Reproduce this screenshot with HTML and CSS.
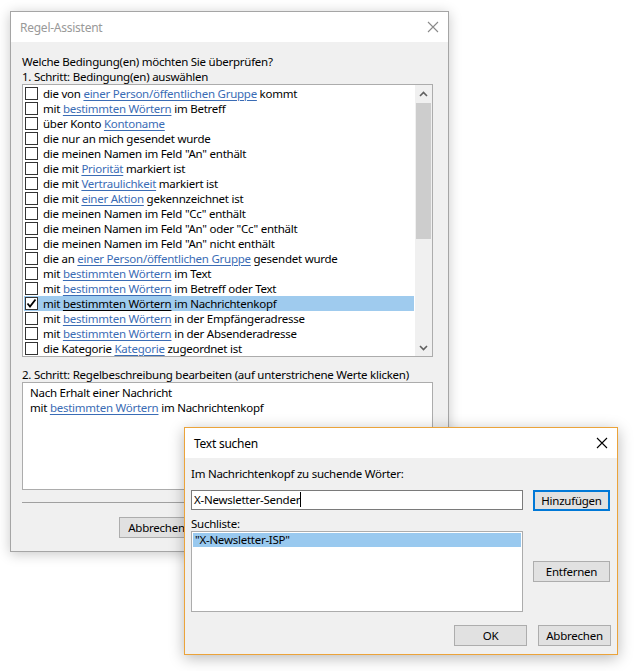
FILE: index.html
```html
<!DOCTYPE html>
<html lang="de">
<head>
<meta charset="utf-8">
<title>Regel-Assistent</title>
<link rel="stylesheet" href="styles.css">
</head>
<body>
<div class="win win-main">
  <div class="titlebar">
    <span class="title inactive">Regel-Assistent</span>
    <svg class="close" width="12" height="12" viewBox="0 0 12 12"><path d="M1 1L11 11M11 1L1 11" stroke="#8a8a8a" stroke-width="1.1" fill="none"/></svg>
  </div>
  <div class="main-body">
    <div class="label">Welche Bedingung(en) möchten Sie überprüfen?</div>
    <div class="label">1. Schritt: Bedingung(en) auswählen</div>
    <div class="listbox">
      <div class="rows">
        <div class="row"><span class="cb"></span><span>die von <a>einer Person/öffentlichen Gruppe</a> kommt</span></div>
        <div class="row"><span class="cb"></span><span>mit <a>bestimmten Wörtern</a> im Betreff</span></div>
        <div class="row"><span class="cb"></span><span>über Konto <a>Kontoname</a></span></div>
        <div class="row"><span class="cb"></span><span>die nur an mich gesendet wurde</span></div>
        <div class="row"><span class="cb"></span><span>die meinen Namen im Feld "An" enthält</span></div>
        <div class="row"><span class="cb"></span><span>die mit <a>Priorität</a> markiert ist</span></div>
        <div class="row"><span class="cb"></span><span>die mit <a>Vertraulichkeit</a> markiert ist</span></div>
        <div class="row"><span class="cb"></span><span>die mit <a>einer Aktion</a> gekennzeichnet ist</span></div>
        <div class="row"><span class="cb"></span><span>die meinen Namen im Feld "Cc" enthält</span></div>
        <div class="row"><span class="cb"></span><span>die meinen Namen im Feld "An" oder "Cc" enthält</span></div>
        <div class="row"><span class="cb"></span><span>die meinen Namen im Feld "An" nicht enthält</span></div>
        <div class="row"><span class="cb"></span><span>die an <a>einer Person/öffentlichen Gruppe</a> gesendet wurde</span></div>
        <div class="row"><span class="cb"></span><span>mit <a>bestimmten Wörtern</a> im Text</span></div>
        <div class="row"><span class="cb"></span><span>mit <a>bestimmten Wörtern</a> im Betreff oder Text</span></div>
        <div class="row selected"><span class="cb checked"><svg width="11" height="11" viewBox="0 0 11 11"><path d="M1.5 5.5L4 8.5L9.5 1.5" stroke="#000" stroke-width="1.8" fill="none"/></svg></span><span>mit <a>bestimmten Wörtern</a> im Nachrichtenkopf</span></div>
        <div class="row"><span class="cb"></span><span>mit <a>bestimmten Wörtern</a> in der Empfängeradresse</span></div>
        <div class="row"><span class="cb"></span><span>mit <a>bestimmten Wörtern</a> in der Absenderadresse</span></div>
        <div class="row"><span class="cb"></span><span>die Kategorie <a>Kategorie</a> zugeordnet ist</span></div>
      </div>
      <div class="scrollbar">
        <div class="sb-arrow"><svg width="9" height="6" viewBox="0 0 9 6"><path d="M1 5L4.5 1.5L8 5" stroke="#606060" stroke-width="1.6" fill="none"/></svg></div>
        <div class="sb-track"><div class="sb-thumb"></div></div>
        <div class="sb-arrow"><svg width="9" height="6" viewBox="0 0 9 6"><path d="M1 1L4.5 4.5L8 1" stroke="#606060" stroke-width="1.6" fill="none"/></svg></div>
      </div>
    </div>
    <div class="label step2">2. Schritt: Regelbeschreibung bearbeiten (auf unterstrichene Werte klicken)</div>
    <div class="desc">
      <div>Nach Erhalt einer Nachricht</div>
      <div>mit <a>bestimmten Wörtern</a> im Nachrichtenkopf</div>
    </div>
    <div class="sep"></div>
    <div class="main-buttons">
      <div class="btn btn-main">Abbrechen</div>
    </div>
  </div>
</div>

<div class="win win-search">
  <div class="titlebar">
    <span class="title">Text suchen</span>
    <svg class="close" width="12" height="12" viewBox="0 0 12 12"><path d="M1 1L11 11M11 1L1 11" stroke="#000" stroke-width="1.1" fill="none"/></svg>
  </div>
  <div class="search-body">
    <div class="label">Im Nachrichtenkopf zu suchende Wörter:</div>
    <div class="s-row1">
      <div class="input"><span class="caret">X-Newsletter-Sender</span></div>
      <div class="btn btn-default">Hinzufügen</div>
    </div>
    <div class="label s-label2">Suchliste:</div>
    <div class="s-row2">
      <div class="s-list"><div class="s-item">"X-Newsletter-ISP"</div></div>
      <div class="s-side"><div class="btn btn-side">Entfernen</div></div>
    </div>
    <div class="s-foot">
      <div class="btn btn-s">OK</div>
      <div class="btn btn-s">Abbrechen</div>
    </div>
  </div>
</div>
</body>
</html>
```
FILE: styles.css
```css
html, body {
  margin: 0;
  padding: 0;
  background: #ffffff;
}
body {
  width: 635px;
  height: 671px;
  position: relative;
  overflow: hidden;
  font-family: "Noto Sans", "Open Sans", sans-serif;
  font-size: 11.5px;
  letter-spacing: -0.25px;
  color: #000;
}
.win {
  position: absolute;
  background: #f0f0f0;
  box-sizing: border-box;
}
.win-main {
  left: 10px;
  top: 11px;
  width: 439px;
  height: 541px;
  border: 1px solid #a5a5a5;
  box-shadow: 0 2px 12px rgba(0,0,0,0.22);
}
.win-search {
  left: 184px;
  top: 427px;
  width: 434px;
  height: 228px;
  border: 1px solid #eba33a;
  box-shadow: 0 3px 14px rgba(0,0,0,0.28);
}
.titlebar {
  background: #fff;
  height: 30px;
  display: flex;
  align-items: center;
  justify-content: space-between;
  padding: 0 9px 0 9px;
}
.title {
  font-size: 12px;
  line-height: 15px;
}
.title.inactive {
  color: #999;
}
.close {
  display: block;
}
.main-body {
  padding: 11px 15px 0 11px;
}
.label {
  line-height: 15px;
  height: 15px;
  white-space: nowrap;
  padding-top: 1px;
  box-sizing: border-box;
}
a {
  color: #3a6cb5;
  text-decoration: underline;
  text-underline-offset: 2px;
}
.listbox {
  margin-top: 1px;
  height: 273px;
  box-sizing: border-box;
  border: 1px solid #acacac;
  background: #fff;
  display: flex;
  overflow: hidden;
}
.rows {
  flex: 1;
  padding: 1px 1px 0 1px;
  overflow: hidden;
}
.row {
  height: 15px;
  line-height: 15px;
  display: flex;
  align-items: center;
  white-space: nowrap;
}
.row.selected {
  background: #9fcbee;
}
.row.selected a {
  color: #000;
}
.cb {
  width: 13px;
  height: 13px;
  box-sizing: border-box;
  border: 1px solid #333;
  background: #fff;
  margin: 0 5px 0 1px;
  flex: none;
  display: flex;
  align-items: center;
  justify-content: center;
}
.cb svg {
  display: block;
}
.scrollbar {
  width: 17px;
  flex: none;
  background: #f0f0f0;
  display: flex;
  flex-direction: column;
}
.sb-arrow {
  height: 17px;
  display: flex;
  align-items: center;
  justify-content: center;
}
.sb-track {
  flex: 1;
  padding: 1px 1px 0 1px;
}
.sb-thumb {
  height: 136px;
  background: #cdcdcd;
}
.step2 {
  margin-top: 9px;
}
.desc {
  margin-top: 1px;
  height: 108px;
  box-sizing: border-box;
  border: 1px solid #acacac;
  background: #fff;
  padding: 2px 7px;
  line-height: 15px;
}
.sep {
  margin-top: 12px;
  height: 1px;
  background: #a0a0a0;
}
.main-buttons {
  margin-top: 14px;
  display: flex;
  padding-left: 97px;
}
.btn {
  box-sizing: border-box;
  height: 21px;
  width: 66px;
  border: 1px solid #adadad;
  background: #e1e1e1;
  display: flex;
  align-items: center;
  justify-content: center;
  white-space: nowrap;
  line-height: 15px;
}
.btn-main {
  width: 75px;
}
.search-body {
  padding: 7px 6px 8px 6px;
}
.s-row1 {
  display: flex;
  gap: 10px;
  margin-top: 10px;
}
.input {
  width: 332px;
  height: 20px;
  box-sizing: border-box;
  border: 1px solid #7a7a7a;
  background: #fff;
  padding: 0 2px;
  line-height: 18px;
}
.caret {
  border-right: 1px solid #000;
}
.btn-default {
  width: 77px;
  border: 2px solid #0078d7;
}
.s-label2 {
  margin-top: 4px;
}
.s-row2 {
  display: flex;
  gap: 10px;
  margin-top: 1px;
}
.s-list {
  width: 332px;
  height: 81px;
  box-sizing: border-box;
  border: 1px solid #acacac;
  background: #fff;
  padding: 1px;
}
.s-item {
  background: #99c9ef;
  height: 14px;
  line-height: 14px;
  padding-left: 2px;
}
.s-side {
  width: 77px;
  padding-top: 30px;
}
.btn-side {
  width: 77px;
}
.s-foot {
  margin-top: 13px;
  display: flex;
  justify-content: flex-end;
  gap: 11px;
}
.btn-s {
  width: 73px;
}
```
